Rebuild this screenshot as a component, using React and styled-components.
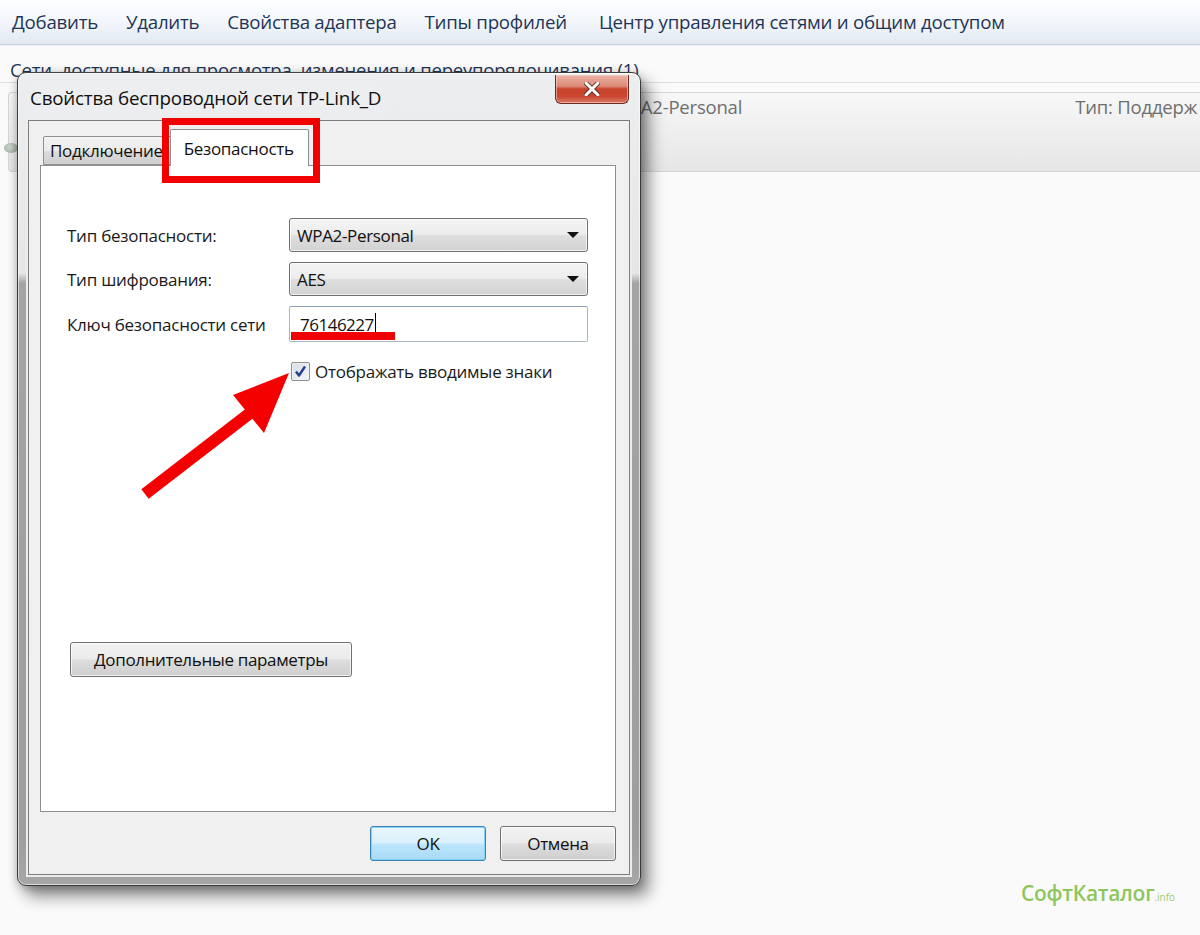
import React from "react";
import styled, { createGlobalStyle } from "styled-components";

const GlobalStyle = createGlobalStyle`
  html, body { margin: 0; padding: 0; }
  body {
    background: #fafafa;
    font-family: "Open Sans", "Noto Sans", "DejaVu Sans", sans-serif;
  }
`;

const Page = styled.div`
  position: relative;
  width: 1200px;
  height: 935px;
  overflow: hidden;
  background: #fafafa;
`;

/* ---------- explorer behind the dialog ---------- */
const Toolbar = styled.div`
  height: 42px;
  display: flex;
  align-items: center;
  gap: 28px;
  padding: 0 0 2px 12px;
  background: linear-gradient(to bottom, #fdfeff 0%, #f1f5fa 55%, #e2e9f1 100%);
  border-bottom: 1px solid #c9d3df;
  box-shadow: 0 1px 0 #eef2f6;
`;

const ToolItem = styled.span`
  font-size: 18.7px;
  color: #1e3556;
  letter-spacing: -0.25px;
  white-space: nowrap;
  margin-left: ${(p) => p.$extra || 0}px;
`;

const GroupHeader = styled.div`
  margin: 16px 0 0 0;
  padding: 0 0 2px 10px;
  font-size: 18.5px;
  color: #1e3556;
  letter-spacing: -0.2px;
  white-space: nowrap;
  border-bottom: 1px solid #e0e0e0;
  height: 19px;
  line-height: 18px;
`;

const NetRow = styled.div`
  margin: 9px 0 0 8px;
  height: 78px;
  display: flex;
  align-items: flex-start;
  border: 1px solid #d6d6d6;
  border-right: none;
  border-radius: 4px 0 0 4px;
  background: linear-gradient(to bottom, #f8f8f8 0%, #f0f0f0 40%, #e6e6e6 100%);
  color: #6f6f6f;
  font-size: 18.5px;
  letter-spacing: -0.2px;
  white-space: nowrap;
  overflow: hidden;
`;

const RowText = styled.span`
  margin-top: 1px;
  margin-left: ${(p) => p.$ml}px;
`;

const NetIcon = styled.div`
  position: absolute;
  left: 4px;
  top: 143px;
  width: 14px;
  height: 10px;
  border-radius: 50%;
  background: radial-gradient(circle at 40% 40%, #cfd8cf, #8da08d);
`;

/* ---------- dialog window ---------- */
const Window = styled.div`
  position: absolute;
  left: 17px;
  top: 72px;
  width: 624px;
  height: 814px;
  box-sizing: border-box;
  display: flex;
  flex-direction: column;
  padding: 0 10px 10px 10px;
  border: 1px solid #3a3a3a;
  border-radius: 9px;
  background: linear-gradient(
    to bottom,
    #eceef0 0px,
    #e4e6e8 200px,
    #a4a4a4 210px,
    #9e9e9e 760px,
    #a6a6a6 100%
  );
  box-shadow: 0 0 0 1px rgba(255, 255, 255, 0.6) inset,
    8px 10px 16px rgba(0, 0, 0, 0.45), 0 2px 10px rgba(0, 0, 0, 0.25);
`;

const TitleBar = styled.div`
  height: 48px;
  display: flex;
  justify-content: space-between;
  align-items: flex-start;
`;

const Title = styled.span`
  margin-top: 12px;
  margin-left: 2px;
  font-size: 18.8px;
  color: #111;
  letter-spacing: -0.2px;
  white-space: nowrap;
  background: rgba(236, 238, 240, 0.8);
  box-shadow: 0 0 8px 6px rgba(236, 238, 240, 0.8);
`;

const CloseBtn = styled.div`
  width: 74px;
  height: 29px;
  margin-top: 2px;
  margin-right: 1px;
  box-sizing: border-box;
  display: flex;
  align-items: center;
  justify-content: center;
  border: 1px solid #6b2b22;
  border-top: none;
  border-radius: 0 0 6px 6px;
  background: linear-gradient(
    to bottom,
    #eab3a6 0%,
    #dc8a77 40%,
    #c8432b 50%,
    #c9452e 75%,
    #dd7a63 100%
  );
  box-shadow: inset 0 0 0 1px rgba(255, 220, 210, 0.55);
`;

const Client = styled.div`
  flex: 1;
  display: flex;
  flex-direction: column;
  background: #f0f0f0;
  border: 1px solid #7d7d7d;
  box-shadow: 0 0 0 2px #ededed;
  padding: 0 13px 13px 11px;
`;

const TabStrip = styled.div`
  display: flex;
  align-items: flex-end;
  height: 44px;
  padding-left: 3px;
`;

const Tab = styled.div`
  box-sizing: border-box;
  height: ${(p) => (p.$active ? 37 : 29)}px;
  padding: ${(p) => (p.$active ? "2px 14px 2px 13px" : "0 8px 0 6px")};
  margin-bottom: ${(p) => (p.$active ? -1 : 0)}px;
  margin-left: ${(p) => (p.$active ? -2 : 0)}px;
  display: flex;
  align-items: center;
  font-size: 17px;
  letter-spacing: -0.3px;
  color: #111;
  white-space: nowrap;
  border: 1px solid #8e8f8f;
  border-bottom: ${(p) => (p.$active ? "none" : "1px solid #8e8f8f")};
  border-radius: 2px 2px 0 0;
  background: ${(p) =>
    p.$active
      ? "#ffffff"
      : "linear-gradient(to bottom, #f2f2f2 0%, #ebebeb 50%, #dddddd 51%, #cfcfcf 100%)"};
  position: relative;
  z-index: ${(p) => (p.$active ? 2 : 1)};
`;

const Panel = styled.div`
  flex: 0 0 647px;
  box-sizing: border-box;
  background: #fff;
  border: 1px solid #8e8f8f;
  display: flex;
  flex-direction: column;
  padding: 52px 0 0 26px;
`;

const Form = styled.div`
  display: grid;
  grid-template-columns: 222px 299px;
  row-gap: 10px;
  align-items: center;
`;

const Label = styled.span`
  font-size: 17px;
  color: #1a1a1a;
  letter-spacing: -0.25px;
  white-space: nowrap;
`;

const Combo = styled.div`
  box-sizing: border-box;
  height: 34px;
  display: flex;
  align-items: center;
  justify-content: space-between;
  padding: 0 8px 0 7px;
  border: 1px solid #707070;
  border-radius: 3px;
  background: linear-gradient(to bottom, #f4f4f4 0%, #ececec 48%, #dedede 52%, #d2d2d2 100%);
  box-shadow: inset 0 0 0 1px rgba(255, 255, 255, 0.7);
  font-size: 17px;
  letter-spacing: -0.35px;
  color: #111;
`;

const Caret = styled.span`
  width: 0;
  height: 0;
  border-left: 6px solid transparent;
  border-right: 6px solid transparent;
  border-top: 6px solid #111;
`;

const TextInput = styled.div`
  position: relative;
  box-sizing: border-box;
  height: 36px;
  display: flex;
  align-items: center;
  padding: 0 0 0 10px;
  border: 1px solid #abb6c4;
  border-top-color: #8f9fb3;
  border-radius: 2px;
  background: #fff;
  font-size: 17px;
  letter-spacing: -0.5px;
  color: #111;
`;

const Cursor = styled.span`
  display: inline-block;
  width: 1px;
  height: 22px;
  background: #000;
  margin-left: 1px;
`;

const CheckRow = styled.label`
  grid-column: 2;
  margin-top: 8px;
  display: flex;
  align-items: center;
  gap: 5px;
  font-size: 17px;
  letter-spacing: -0.25px;
  color: #1a1a1a;
  white-space: nowrap;
`;

const CheckBox = styled.span`
  width: 19px;
  height: 19px;
  box-sizing: border-box;
  margin-left: 2px;
  border: 1px solid #8f8f8f;
  border-radius: 2px;
  background: linear-gradient(135deg, #d9dfe7, #f2f4f7);
  box-shadow: inset 0 0 0 1px #eef1f5;
  display: flex;
  align-items: center;
  justify-content: center;
`;

const Button = styled.div`
  box-sizing: border-box;
  height: ${(p) => p.$h || 35}px;
  width: ${(p) => p.$w}px;
  display: flex;
  align-items: center;
  justify-content: center;
  font-size: 17px;
  letter-spacing: -0.35px;
  color: #111;
  white-space: nowrap;
  border: 1px solid ${(p) => (p.$primary ? "#3c7fb1" : "#707070")};
  border-radius: 3px;
  background: ${(p) =>
    p.$primary
      ? "linear-gradient(to bottom, #eaf6fd 0%, #d9f0fc 48%, #bee6fd 52%, #a7d9f5 100%)"
      : "linear-gradient(to bottom, #f2f2f2 0%, #ebebeb 48%, #dddddd 52%, #cfcfcf 100%)"};
  box-shadow: inset 0 0 0 1px
    ${(p) => (p.$primary ? "rgba(120, 210, 245, 0.9)" : "rgba(255, 255, 255, 0.7)")};
`;

const AdvButton = styled(Button)`
  margin: 259px 0 0 3px;
`;

const ButtonRow = styled.div`
  margin-top: 14px;
  display: flex;
  justify-content: flex-end;
  gap: 14px;
  padding-right: 0;
`;

/* ---------- annotations ---------- */
const RedBox = styled.div`
  position: absolute;
  left: 162px;
  top: 118px;
  width: 158px;
  height: 65px;
  box-sizing: border-box;
  border: 7px solid #f20000;
  z-index: 5;
`;

const RedLine = styled.div`
  position: absolute;
  left: 291px;
  top: 332px;
  width: 104px;
  height: 8px;
  background: #f00000;
  z-index: 5;
`;

const Arrow = styled.svg`
  position: absolute;
  left: 0;
  top: 0;
  z-index: 5;
  pointer-events: none;
`;

const Watermark = styled.div`
  position: absolute;
  left: 1021px;
  top: 879px;
  display: flex;
  align-items: baseline;
  color: #8ec65c;
  font-family: "Open Sans", "Noto Sans", sans-serif;
  font-weight: 600;
  font-size: 21px;
  letter-spacing: -0.3px;
`;

const WatermarkSmall = styled.span`
  font-size: 10px;
  font-weight: 400;
  color: #9ccd70;
  letter-spacing: 0;
`;

export default function App() {
  return (
    <Page>
      <GlobalStyle />
      <Toolbar>
        <ToolItem>Добавить</ToolItem>
        <ToolItem>Удалить</ToolItem>
        <ToolItem>Свойства адаптера</ToolItem>
        <ToolItem>Типы профилей</ToolItem>
        <ToolItem $extra={4}>Центр управления сетями и общим доступом</ToolItem>
      </Toolbar>
      <GroupHeader>
        Сети, доступные для просмотра, изменения и переупорядочивания (1)
      </GroupHeader>
      <NetRow>
        <RowText $ml={604}>WPA2-Personal</RowText>
        <RowText $ml={333}>Тип: Поддерж</RowText>
      </NetRow>
      <NetIcon />

      <Window>
        <TitleBar>
          <Title>Свойства беспроводной сети TP-Link_D</Title>
          <CloseBtn>
            <svg width="16" height="14" viewBox="0 0 16 14">
              <path
                d="M2 1 L14 13 M14 1 L2 13"
                stroke="#5a2a22"
                strokeWidth="4.6"
                strokeLinecap="round"
              />
              <path
                d="M2 1 L14 13 M14 1 L2 13"
                stroke="#ffffff"
                strokeWidth="3"
                strokeLinecap="round"
              />
            </svg>
          </CloseBtn>
        </TitleBar>
        <Client>
          <TabStrip>
            <Tab>Подключение</Tab>
            <Tab $active>Безопасность</Tab>
          </TabStrip>
          <Panel>
            <Form>
              <Label>Тип безопасности:</Label>
              <Combo>
                WPA2-Personal
                <Caret />
              </Combo>
              <Label>Тип шифрования:</Label>
              <Combo>
                AES
                <Caret />
              </Combo>
              <Label>Ключ безопасности сети</Label>
              <TextInput>
                76146227
                <Cursor />
              </TextInput>
              <CheckRow>
                <CheckBox>
                  <svg width="13" height="13" viewBox="0 0 13 13">
                    <path
                      d="M2 6.5 L5 10.5 L11 1.5"
                      fill="none"
                      stroke="#22408e"
                      strokeWidth="2.4"
                      strokeLinejoin="round"
                    />
                  </svg>
                </CheckBox>
                Отображать вводимые знаки
              </CheckRow>
            </Form>
            <AdvButton $w={282} $h={35}>
              Дополнительные параметры
            </AdvButton>
          </Panel>
          <ButtonRow>
            <Button $primary $w={116}>
              OK
            </Button>
            <Button $w={116}>Отмена</Button>
          </ButtonRow>
        </Client>
      </Window>

      <RedBox />
      <RedLine />
      <Arrow width="1200" height="935" viewBox="0 0 1200 935">
        <path d="M145 494 L254 410" stroke="#f50000" strokeWidth="12" strokeLinecap="butt" />
        <polygon points="289,373 233,395 264,433" fill="#f50000" />
      </Arrow>

      <Watermark>
        СофтКаталог<WatermarkSmall>.info</WatermarkSmall>
      </Watermark>
    </Page>
  );
}
